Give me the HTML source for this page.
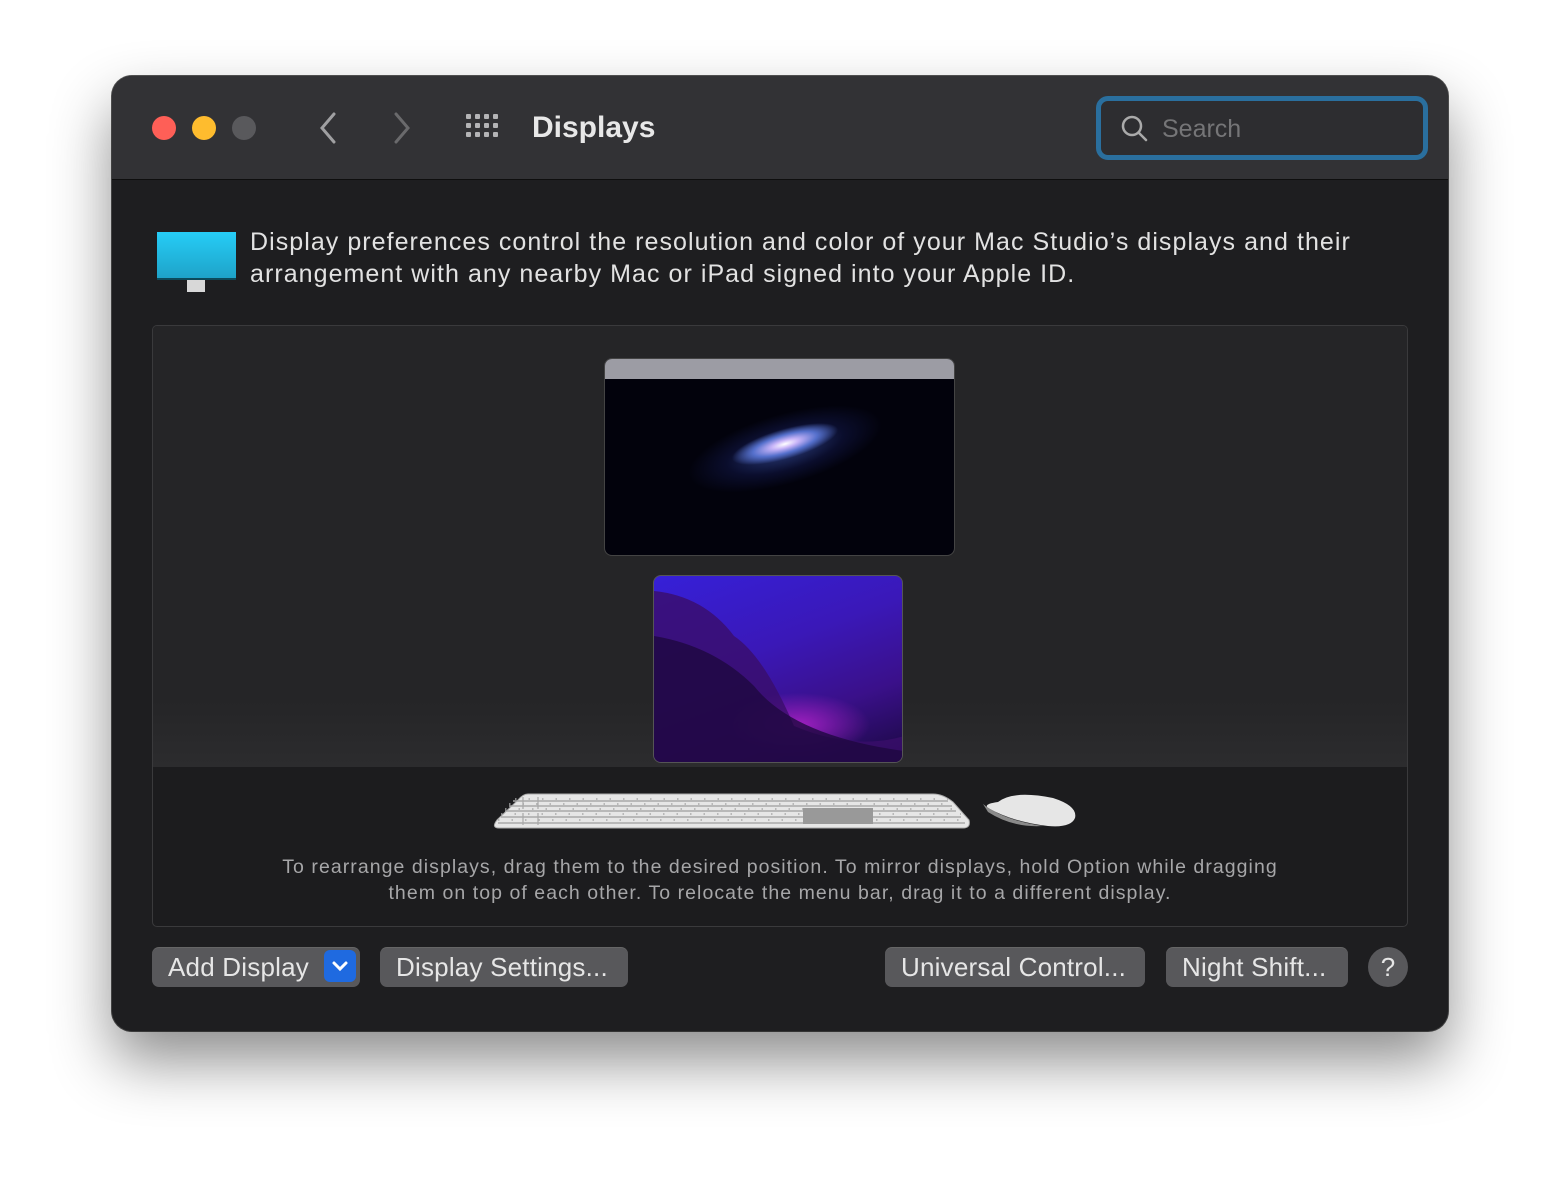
<!DOCTYPE html>
<html><head><meta charset="utf-8"><style>
*{margin:0;padding:0;box-sizing:border-box}
body{width:1560px;height:1180px;background:#fff;position:relative;overflow:hidden;font-family:"Liberation Sans",sans-serif}
.win{position:absolute;left:112px;top:76px;width:1336px;height:955px;border-radius:20px;background:#1e1e20;overflow:hidden;box-shadow:0 30px 60px rgba(0,0,0,.45),0 0 0 1px #555;}
.tb{position:absolute;left:0;top:0;width:100%;height:104px;background:#323235;border-bottom:1px solid #0e0e0e}
.dot{position:absolute;top:40px;width:24px;height:24px;border-radius:50%}
.abs{position:absolute}
.btn{position:absolute;top:871px;height:40px;background:#58585b;border-radius:7px;color:#e6e6e6;font-size:26px;line-height:38px;padding-left:16px;border-top:1px solid #666;letter-spacing:.2px}
</style></head><body>
<div class="win">
 <div class="tb">
  <div class="dot" style="left:40px;background:#fe5f57"></div>
  <div class="dot" style="left:80px;background:#febc2e"></div>
  <div class="dot" style="left:120px;background:#59595c"></div>
  <svg class="abs" style="left:200px;top:34px" width="30" height="36"><path d="M22 4 L10 18 L22 32" stroke="#a0a0a2" stroke-width="3" fill="none" stroke-linecap="round"/></svg>
  <svg class="abs" style="left:276px;top:34px" width="30" height="36"><path d="M8 4 L20 18 L8 32" stroke="#6a6a6c" stroke-width="3" fill="none" stroke-linecap="round"/></svg>
  <svg class="abs" style="left:352px;top:36px" width="40" height="32" fill="#b4b4b6">
   <g><rect x="2" y="2" width="5" height="5" rx="1"/><rect x="11" y="2" width="5" height="5" rx="1"/><rect x="20" y="2" width="5" height="5" rx="1"/><rect x="29" y="2" width="5" height="5" rx="1"/>
   <rect x="2" y="11" width="5" height="5" rx="1"/><rect x="11" y="11" width="5" height="5" rx="1"/><rect x="20" y="11" width="5" height="5" rx="1"/><rect x="29" y="11" width="5" height="5" rx="1"/>
   <rect x="2" y="20" width="5" height="5" rx="1"/><rect x="11" y="20" width="5" height="5" rx="1"/><rect x="20" y="20" width="5" height="5" rx="1"/><rect x="29" y="20" width="5" height="5" rx="1"/></g></svg>
  <div class="abs" style="left:420px;top:35px;font-size:30px;font-weight:bold;color:#e8e8e8">Displays</div>
  <div class="abs" style="left:984px;top:20px;width:332px;height:64px;border:5px solid #2a6f9e;border-radius:12px;background:#2d2d30"></div>
  <svg class="abs" style="left:1008px;top:38px" width="30" height="30"><circle cx="12" cy="12" r="9" stroke="#aaa" stroke-width="2.5" fill="none"/><path d="M19 19 L26 26" stroke="#aaa" stroke-width="2.5" stroke-linecap="round"/></svg>
  <div class="abs" style="left:1050px;top:39px;font-size:25px;color:#757577">Search</div>
 </div>
 <div class="abs" style="left:45px;top:156px;width:79px;height:48px;background:linear-gradient(#26cdf7,#1ea3c9);border-bottom:2px solid #0c4a5a"></div>
 <div class="abs" style="left:75px;top:204px;width:18px;height:12px;background:#d8d8d8"></div>
 <div class="abs" style="left:138px;top:150px;font-size:25px;line-height:32px;color:#e2e2e2;letter-spacing:1.05px;white-space:nowrap">Display preferences control the resolution and color of your Mac Studio’s displays and their<br>arrangement with any nearby Mac or iPad signed into your Apple ID.</div>
 <div class="abs" style="left:40px;top:249px;width:1256px;height:602px;border:1px solid #3a3a3c;border-radius:5px;background:#1c1c1e;overflow:hidden">
  <div class="abs" style="left:0;top:0;width:100%;height:441px;background:linear-gradient(#252527 0%,#252527 85%,#2c2c2e 100%)"></div>
  <div class="abs" style="left:451px;top:32px;width:351px;height:198px;border-radius:8px;border:1px solid #444;overflow:hidden;background:#02020c">
   <div style="height:20px;background:#9c9ca4"></div>
   <div class="abs" style="left:80px;top:55px;width:200px;height:70px;transform:rotate(-16deg);background:radial-gradient(ellipse 50% 50% at 50% 50%,rgba(70,100,200,.6),rgba(30,40,120,.3) 60%,transparent 100%)"></div>
   <div class="abs" style="left:125px;top:70px;width:110px;height:30px;transform:rotate(-16deg);background:radial-gradient(ellipse 50% 50% at 50% 50%,#fff 0%,#c8b4f8 25%,#5570cc 60%,transparent 100%)"></div>
  </div>
  <div class="abs" style="left:500px;top:249px;width:250px;height:188px;border-radius:8px;border:1px solid #555;overflow:hidden;background:radial-gradient(ellipse 90px 40px at 58% 80%,#a020c0,transparent 80%),linear-gradient(160deg,#3620d8 0%,#3a18b8 40%,#3a108a 70%,#1a0840 100%)">
   <svg width="250" height="188" style="position:absolute;left:0;top:0"><path d="M0 15 Q50 20 80 60 Q110 80 140 150 Q200 175 250 160 L250 188 L0 188Z" fill="#3a0e6a" opacity=".8"/><path d="M0 60 Q60 70 100 110 Q140 160 250 175 L250 188 L0 188Z" fill="#1e0840" opacity=".8"/></svg></div>
  <svg class="abs" style="left:340px;top:466px" width="600" height="44">
   <path d="M35 2 L440 2 Q450 2 460 10 L476 28 Q478 36 470 36 L6 36 Q-2 36 4 28 L25 8 Q30 2 35 2Z" fill="#e6e6e6" stroke="#aaa"/>
   <g stroke="#a8a8a8" stroke-width="1.5"><path d="M20 9 H455 M16 14 H459 M12 19 H463 M8 25 H468 M5 31 H472"/></g>
   <g stroke="#a8a8a8" stroke-width="1.2" stroke-dasharray="12 4"><path d="M30 5 V34 M45 5 V34"/></g>
   <g stroke="#a8a8a8" stroke-width="1.5" stroke-dasharray="1.5 12"><path d="M22 7 H455 M16 12 H459 M12 17 H463 M8 22 H468 M5 28 H472"/></g>
   <rect x="310" y="16" width="70" height="16" fill="#999"/>
   <path d="M505 10 Q520 -2 560 6 Q585 14 582 26 Q578 36 555 34 Q520 30 495 16 Q490 12 505 10Z" fill="#e6e6e6"/>
   <path d="M490 12 Q510 28 550 34 Q520 36 495 20Z" fill="#8a8a8a"/>
  </svg>
  <div class="abs" style="left:0;top:528px;width:100%;text-align:center;font-size:19.5px;line-height:26px;color:#a6a6a8;letter-spacing:1.05px;white-space:nowrap">To rearrange displays, drag them to the desired position. To mirror displays, hold Option while dragging<br>them on top of each other. To relocate the menu bar, drag it to a different display.</div>
 </div>
 <div class="btn" style="left:40px;width:208px">Add Display<div class="abs" style="left:172px;top:2px;width:32px;height:32px;border-radius:6px;background:#1f6ae0"><svg width="32" height="32"><path d="M10 13 L16 19 L22 13" stroke="#fff" stroke-width="3" fill="none" stroke-linecap="round"/></svg></div></div>
 <div class="btn" style="left:268px;width:248px">Display Settings...</div>
 <div class="btn" style="left:773px;width:260px">Universal Control...</div>
 <div class="btn" style="left:1054px;width:182px">Night Shift...</div>
 <div class="abs" style="left:1256px;top:871px;width:40px;height:40px;border-radius:50%;background:#58585b;color:#e6e6e6;font-size:26px;line-height:40px;text-align:center">?</div>
</div>
</body></html>
